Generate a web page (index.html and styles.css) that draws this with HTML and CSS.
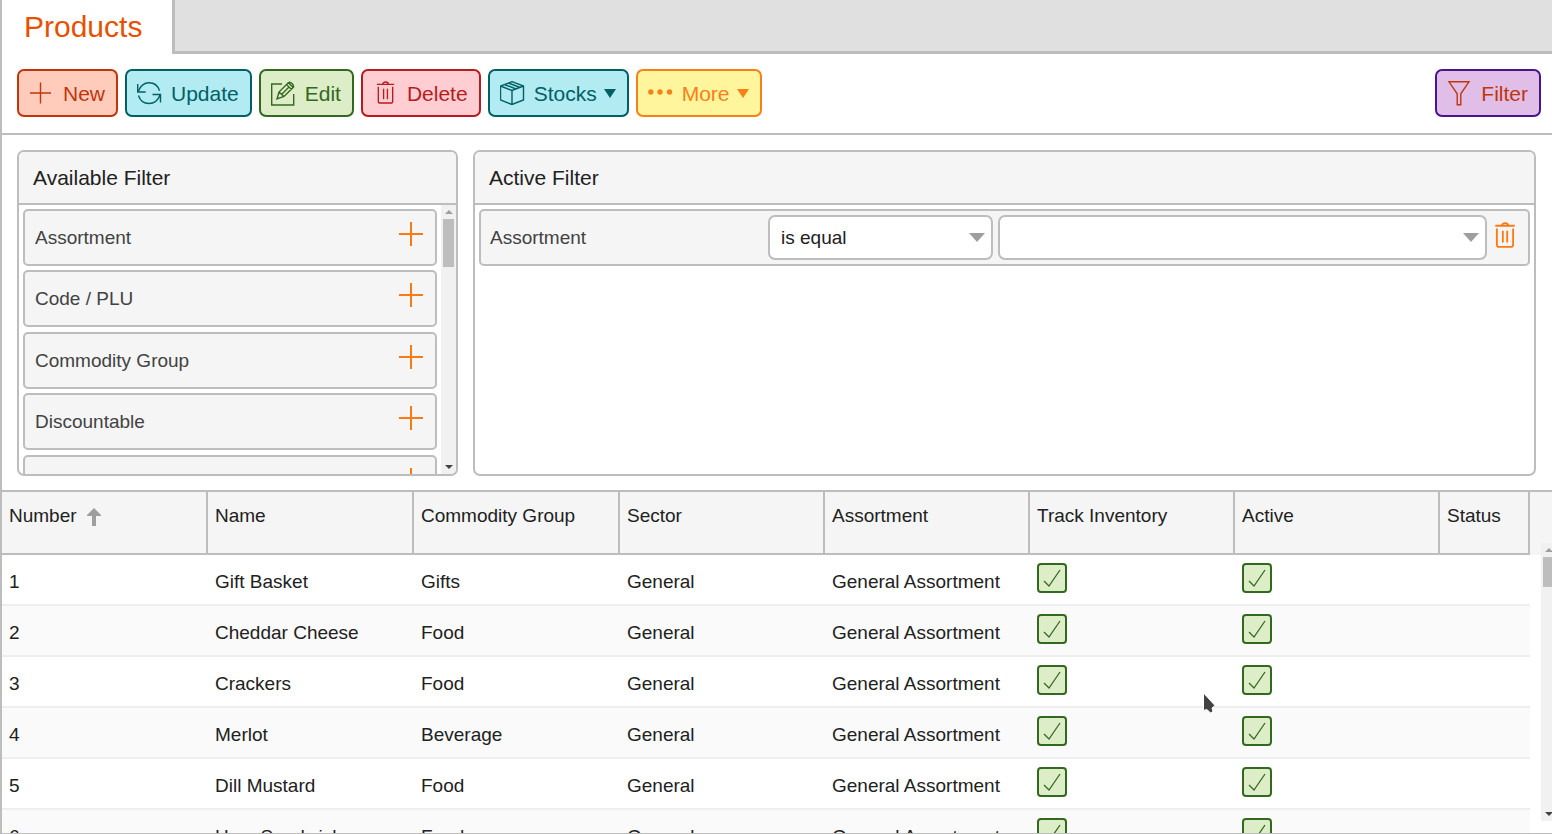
FILE: index.html
```html
<!DOCTYPE html>
<html lang="en">
<head>
<meta charset="UTF-8">
<meta name="viewport" content="width=device-width, initial-scale=1.0">
<title>Products</title>
<link rel="stylesheet" href="styles.css">
</head>
<body>
<!-- Shared icons -->
<svg class="sprite" aria-hidden="true">
    <symbol id="plus" viewBox="0 0 24 24"><path d="M12 0v24M0 12h24"/></symbol>
    <symbol id="trash" viewBox="0 0 24 24"><path d="M3 3.500h18M9 3.500a3 2.500 0 0 1 6 0M4.500 6v15q0 2 2 2h11q2 0 2-2V6M10 8v11M14 8v11"/></symbol>
    <symbol id="sort" viewBox="0 0 16 20"><path d="M8 1 1 8v1h5v10h4V9h5V8z"/></symbol>
    <symbol id="up" viewBox="0 0 8 4"><path d="M0 4 4 0l4 4z"/></symbol>
    <symbol id="down" viewBox="0 0 8 4"><path d="M0 0h8L4 4z"/></symbol>
</svg>

<div class="app">
    <header class="tabs">
        <h1 class="tab">Products</h1>
        <div class="tab-space"></div>
    </header>

    <div class="toolbar">
        <button class="btn new" type="button">
            <svg class="icon" viewBox="0 0 25 25"><path d="M11.500 1.500v21M1 12h21"/></svg>
            New
        </button>
        <button class="btn update" type="button">
            <svg class="icon" viewBox="0 0 25 25"><path d="M.700 3v8h8M1.500 10C3.500 5 7 1.700 12 1.700c5 0 9 3 10.500 8M23.500 21.500v-8h-8M23 14C21 19.500 17 22.500 12 22.500c-5 0-9-3-10.500-8"/></svg>
            Update
        </button>
        <button class="btn edit" type="button">
            <svg class="icon" viewBox="0 0 25 25"><path d="M11 3H.700v21h22V13M6 18l2-7 9.500-9.500q1.500-1 3.500 1t1.500 3.500L13 15.500zM8 11l5 4.500M15.500 3.500l5 5M17.500 1.800l5 5M10.500 13.500l7.500-7.500"/></svg>
            Edit
        </button>
        <button class="btn delete" type="button">
            <svg class="icon small"><use href="#trash"/></svg>
            Delete
        </button>
        <button class="btn update" type="button">
            <svg class="icon" viewBox="0 0 25 25"><path d="M12 .700 23.500 5v14L12 23.500.500 19V5zM.500 5 12 9.500 23.500 5M12 9.500v14M4.500 3.500 16 8M8.500 2 20 6.500"/></svg>
            Stocks
            <span class="caret"></span>
        </button>
        <button class="btn more" type="button">
            <svg class="icon dots" viewBox="0 0 25 25"><circle cx="2.800" cy="11" r="2.700"/><circle cx="12" cy="11" r="2.700"/><circle cx="21.500" cy="11" r="2.700"/></svg>
            More
            <span class="caret"></span>
        </button>
        <button class="btn filter" type="button">
            <svg class="icon" viewBox="0 0 25 25"><path d="M2 .800h20l-8.200 12v11h-3.600v-11z"/></svg>
            Filter
        </button>
    </div>

    <div class="filters">
        <section class="panel">
            <h2>Available Filter</h2>
            <div class="panel-body">
                <ul class="available">
                    <li>Assortment <button type="button" aria-label="Add Assortment"><svg><use href="#plus"/></svg></button></li>
                    <li>Code / PLU <button type="button" aria-label="Add Code / PLU"><svg><use href="#plus"/></svg></button></li>
                    <li>Commodity Group <button type="button" aria-label="Add Commodity Group"><svg><use href="#plus"/></svg></button></li>
                    <li>Discountable <button type="button" aria-label="Add Discountable"><svg><use href="#plus"/></svg></button></li>
                    <li><button type="button" aria-label="Add filter"><svg><use href="#plus"/></svg></button></li>
                </ul>
                <div class="scrollbar">
                    <svg class="arrow up"><use href="#up"/></svg>
                    <div class="thumb"></div>
                    <svg class="arrow"><use href="#down"/></svg>
                </div>
            </div>
        </section>
        <section class="panel">
            <h2>Active Filter</h2>
            <div class="active-row">
                <label for="operator">Assortment</label>
                <select id="operator"><option>is equal</option></select>
                <select aria-label="Assortment value"><option></option></select>
                <button type="button" aria-label="Remove filter"><svg><use href="#trash"/></svg></button>
            </div>
        </section>
    </div>

    <div class="grid">
        <div class="grid-clip">
            <table id="products">
                <thead>
                    <tr>
                        <th>Number <svg class="sort"><use href="#sort"/></svg></th>
                        <th>Name</th>
                        <th>Commodity Group</th>
                        <th>Sector</th>
                        <th>Assortment</th>
                        <th>Track Inventory</th>
                        <th>Active</th>
                        <th class="status">Status</th>
                    </tr>
                </thead>
                <tbody>
                    <!-- Products will be added here -->
                </tbody>
            </table>
        </div>
        <div class="scrollbar">
            <svg class="arrow up"><use href="#up"/></svg>
            <div class="thumb"></div>
            <svg class="arrow"><use href="#down"/></svg>
        </div>
    </div>
</div>

<svg class="pointer" viewBox="0 0 14 22" aria-hidden="true"><path d="M1.500 1v17.500l3.500-1 3.500 3.500 2.500-1.500-1-3.500 3-2.500z"/></svg>

<script>
var products = [
    ['Gift Basket', 'Gifts'],
    ['Cheddar Cheese', 'Food'],
    ['Crackers', 'Food'],
    ['Merlot', 'Beverage'],
    ['Dill Mustard', 'Food'],
    ['Ham Sandwich', 'Food']
];

function addProducts() {
    var body = document.getElementById("products").tBodies[0];
    for (var i = 0; i < products.length; i++) {
        var row = body.insertRow(-1);
        var name = products[i][0];
        var cells = [
            i + 1,
            name,
            products[i][1],
            'General',
            'General Assortment',
            '<input type="checkbox" checked aria-label="Track inventory of ' + name + '">',
            '<input type="checkbox" checked aria-label="' + name + ' active">',
            ''
        ];
        for (var j = 0; j < cells.length; j++) {
            row.insertCell(-1).innerHTML = cells[j];
        }
    }
}

addProducts();
</script>
</body>
</html>
```
FILE: styles.css
```css
* {
    box-sizing: border-box;
}
body {
    margin: 0;
    font-family: "Liberation Sans", Arial, sans-serif;
    font-size: 19px;
    color: #212121;
    background: #fff;
}
button, select {
    font: inherit;
}
svg {
    display: block;
    flex: none;
    fill: none;
    stroke: currentColor;
}
.sprite {
    display: none;
}
.app {
    display: flex;
    flex-direction: column;
    height: 100vh;
    overflow: hidden;
    border-left: 2px solid #bdbdbd;
    border-bottom: 1px solid #bdbdbd;
}

/* Tabs */
.tabs {
    display: flex;
    flex: none;
}
.tab {
    margin: 0;
    padding: 0 30px 0 22px;
    font-size: 30px;
    font-weight: normal;
    line-height: 54px;
    color: #e65100;
}
.tab-space {
    flex: 1;
    background: #e0e0e0;
    border-left: 3px solid #bdbdbd;
    border-bottom: 3px solid #bdbdbd;
}

/* Toolbar */
.toolbar {
    display: flex;
    flex: none;
    gap: 7px;
    padding: 15px 11px 16px 15px;
    border-bottom: 2px solid #bdbdbd;
}
.btn {
    display: flex;
    align-items: center;
    gap: 9px;
    height: 48px;
    padding: 1px 11px 0 10px;
    border: 2px solid;
    border-radius: 7px;
    font-size: 21px;
}
.icon {
    width: 25px;
    height: 25px;
    stroke-width: 1.4;
}
.icon.small {
    height: 23px;
    margin-bottom: 2px;
}
.new {
    color: #bf360c;
    background: #ffccbc;
}
.update {
    color: #006064;
    background: #b2ebf2;
}
.edit {
    color: #33691e;
    background: #dcedc8;
}
.delete {
    color: #b71c1c;
    background: #ffcdd2;
}
.more {
    color: #f97f17;
    background: #fff59d;
}
.filter {
    margin-left: auto;
    color: #bf360c;
    background: #e1bee7;
    border-color: #4a148c;
}
.dots {
    fill: currentColor;
    stroke: none;
}
.caret {
    margin-left: -2px;
    border: 6px solid transparent;
    border-top: 9px solid;
    border-bottom: 0;
}

/* Filter panels */
.filters {
    display: grid;
    flex: none;
    grid-template-columns: 441fr 1063fr;
    gap: 15px;
    height: 355px;
    padding: 15px 16px 14px 15px;
}
.panel {
    display: flex;
    flex-direction: column;
    overflow: hidden;
    border: 2px solid #bdbdbd;
    border-radius: 7px;
}
.panel h2 {
    flex: none;
    margin: 0;
    padding: 0 14px;
    font-size: 21px;
    font-weight: normal;
    line-height: 51px;
    background: #f5f5f5;
    border-bottom: 2px solid #bdbdbd;
}
.panel-body {
    display: flex;
    flex: 1;
    min-height: 0;
}
.available {
    flex: 1;
    margin: 0;
    padding: 4px;
    list-style: none;
}
.available li {
    display: flex;
    align-items: center;
    justify-content: space-between;
    height: 57px;
    margin-bottom: 4px;
    padding: 0 12px 0 10px;
    color: #424242;
    background: #f5f5f5;
    border: 2px solid #bdbdbd;
    border-radius: 5px;
}
.available li:nth-child(even) {
    margin-bottom: 5px;
}
.available button, .active-row button {
    padding: 0;
    border: 0;
    background: none;
    color: #fb7a14;
}
.available button {
    margin-left: auto;
    padding-bottom: 8px;
}
.available svg {
    width: 24px;
    height: 24px;
    stroke-width: 2;
}
.active-row {
    display: grid;
    grid-template-columns: 273fr 225fr 489fr 26px;
    align-items: center;
    gap: 5px;
    margin: 4px;
    padding: 4px 10px 4px 9px;
    color: #424242;
    background: #f5f5f5;
    border: 2px solid #bdbdbd;
    border-radius: 5px;
}
.active-row button {
    padding-bottom: 5px;
}
.active-row svg {
    width: 26px;
    height: 26px;
    stroke-width: 1.7;
}
select {
    height: 45px;
    min-width: 0;
    padding: 0 11px;
    appearance: none;
    color: #212121;
    border: 2px solid #bdbdbd;
    border-radius: 7px;
    background: #fff url("data:image/svg+xml,%3Csvg xmlns='http://www.w3.org/2000/svg' width='16' height='9'%3E%3Cpath d='M0 0h16L8 9z' fill='%239e9e9e'/%3E%3C/svg%3E") no-repeat right 6px center;
}

/* Scrollbars */
.scrollbar {
    display: flex;
    flex-direction: column;
    align-items: center;
    width: 15px;
    padding: 5px 0;
    background: #f1f1f1;
}
.arrow {
    width: 8px;
    height: 4px;
    margin-top: auto;
    fill: #424242;
    stroke: none;
}
.arrow.up {
    margin: 0 0 5px;
    fill: #9e9e9e;
}
.thumb {
    width: 11px;
    height: 48px;
    background: #bdbdbd;
}

/* Product table */
.grid {
    position: relative;
    flex: 1;
    min-height: 0;
    border-top: 2px solid #bdbdbd;
}
.grid-clip {
    height: 100%;
    overflow: hidden;
    background: linear-gradient(#f5f5f5 63px, #fff 63px);
}
.grid .scrollbar {
    position: absolute;
    top: 51px;
    right: -4px;
    bottom: 12px;
}
.grid .thumb {
    height: 30px;
}
table {
    width: calc(100% - 22px);
    table-layout: fixed;
    border-collapse: separate;
    border-spacing: 0;
}
th, td {
    padding: 0 7px;
    text-align: left;
    font-weight: normal;
    white-space: nowrap;
}
th {
    height: 63px;
    padding-bottom: 14px;
    border-right: 2px solid #bdbdbd;
    border-bottom: 2px solid #bdbdbd;
}
th:nth-child(-n+3) {
    width: 206px;
}
td {
    height: 51px;
    padding-top: 5px;
    background: #fff;
    border-bottom: 2px solid #eee;
}
tr:nth-child(even) td {
    background: #fafafa;
}
.status {
    width: 90px;
}
.sort {
    display: inline-block;
    width: 16px;
    height: 20px;
    margin-left: 4px;
    vertical-align: -5px;
    fill: #9e9e9e;
    stroke: none;
}
input[type='checkbox'] {
    display: block;
    width: 30px;
    height: 30px;
    margin: 0 0 8px;
    appearance: none;
    border: 2px solid #33691e;
    border-radius: 4px;
    background: #dcedc8 url("data:image/svg+xml,%3Csvg xmlns='http://www.w3.org/2000/svg' width='26' height='26'%3E%3Cpath d='M5 16l5 5L21 5' fill='none' stroke='%2333691e' stroke-width='1.3'/%3E%3C/svg%3E") center;
}

.pointer {
    position: absolute;
    top: 692px;
    left: 1202px;
    width: 14px;
    height: 22px;
    fill: #424242;
    stroke: #fff;
}
```
